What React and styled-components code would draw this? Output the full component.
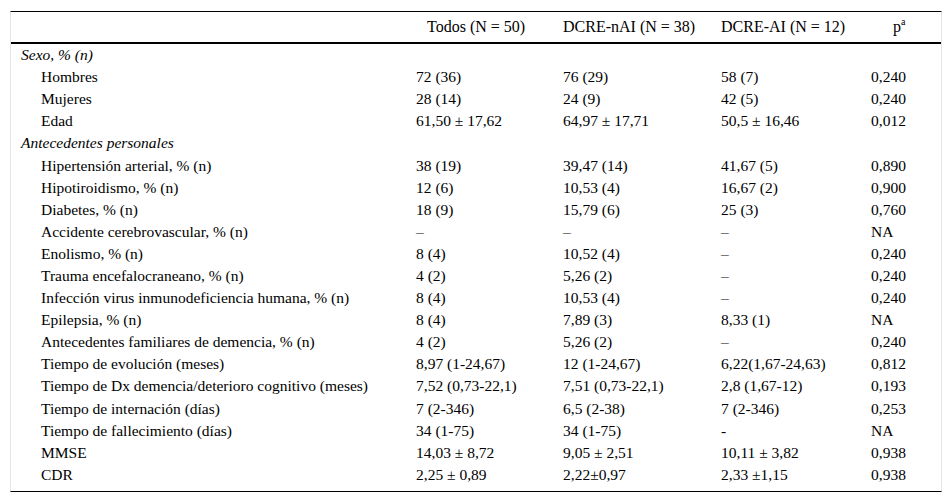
import React from "react";
import styled, { createGlobalStyle } from "styled-components";

const GlobalStyle = createGlobalStyle`
  html, body {
    margin: 0;
    padding: 0;
    background: #ffffff;
  }
`;

const Page = styled.div`
  padding: 11px 10px 12px 10px;
  font-family: "Liberation Serif", "Times New Roman", serif;
  font-size: 15.5px;
  color: #000;
`;

const Frame = styled.div`
  width: 930px;
  border-left: 1px solid #e4e4e4;
  border-right: 1px solid #e4e4e4;
  border-top: 1px solid #000;
  border-bottom: 1px solid #000;
`;

const COLS = "405px 147px 158px 150px 70px";

const HeadRow = styled.div`
  display: grid;
  grid-template-columns: ${COLS};
  height: 30px;
  align-items: center;
  font-size: 16px;
  border-bottom: 2px solid #000;
`;

const HeadCell = styled.div`
  padding-left: ${(p) => p.$offset || 0}px;
  white-space: nowrap;

  sup {
    font-size: 10px;
    vertical-align: 7px;
    line-height: 0;
  }
`;

const Body = styled.div`
  padding-bottom: 5px;
`;

const Row = styled.div`
  display: grid;
  grid-template-columns: ${COLS};
  height: 22.1px;
  align-items: center;
`;

const Label = styled.div`
  padding-left: ${(p) => (p.$group ? 10 : 30)}px;
  font-style: ${(p) => (p.$group ? "italic" : "normal")};
  white-space: nowrap;
`;

const Value = styled.div`
  white-space: nowrap;
`;

const headers = [
  { text: "", offset: 0 },
  { text: "Todos (N = 50)", offset: 11 },
  { text: "DCRE-nAI (N = 38)", offset: 0 },
  { text: "DCRE-AI (N = 12)", offset: 0 },
];

const rows = [
  { group: "Sexo, % (n)" },
  { label: "Hombres", v: ["72 (36)", "76 (29)", "58 (7)", "0,240"] },
  { label: "Mujeres", v: ["28 (14)", "24 (9)", "42 (5)", "0,240"] },
  { label: "Edad", v: ["61,50 ± 17,62", "64,97 ± 17,71", "50,5 ± 16,46", "0,012"] },
  { group: "Antecedentes personales" },
  { label: "Hipertensión arterial, % (n)", v: ["38 (19)", "39,47 (14)", "41,67 (5)", "0,890"] },
  { label: "Hipotiroidismo, % (n)", v: ["12 (6)", "10,53 (4)", "16,67 (2)", "0,900"] },
  { label: "Diabetes, % (n)", v: ["18 (9)", "15,79 (6)", "25 (3)", "0,760"] },
  { label: "Accidente cerebrovascular, % (n)", v: ["–", "–", "–", "NA"] },
  { label: "Enolismo, % (n)", v: ["8 (4)", "10,52 (4)", "–", "0,240"] },
  { label: "Trauma encefalocraneano, % (n)", v: ["4 (2)", "5,26 (2)", "–", "0,240"] },
  { label: "Infección virus inmunodeficiencia humana, % (n)", v: ["8 (4)", "10,53 (4)", "–", "0,240"] },
  { label: "Epilepsia, % (n)", v: ["8 (4)", "7,89 (3)", "8,33 (1)", "NA"] },
  { label: "Antecedentes familiares de demencia, % (n)", v: ["4 (2)", "5,26 (2)", "–", "0,240"] },
  { label: "Tiempo de evolución (meses)", v: ["8,97 (1-24,67)", "12 (1-24,67)", "6,22(1,67-24,63)", "0,812"] },
  { label: "Tiempo de Dx demencia/deterioro cognitivo (meses)", v: ["7,52 (0,73-22,1)", "7,51 (0,73-22,1)", "2,8 (1,67-12)", "0,193"] },
  { label: "Tiempo de internación (días)", v: ["7 (2-346)", "6,5 (2-38)", "7 (2-346)", "0,253"] },
  { label: "Tiempo de fallecimiento (días)", v: ["34 (1-75)", "34 (1-75)", "-", "NA"] },
  { label: "MMSE", v: ["14,03 ± 8,72", "9,05 ± 2,51", "10,11 ± 3,82", "0,938"] },
  { label: "CDR", v: ["2,25 ± 0,89", "2,22±0,97", "2,33 ±1,15", "0,938"] },
];

const App = () => {
  return (
    <Page>
      <GlobalStyle />
      <Frame>
        <HeadRow>
          {headers.map((h, i) => (
            <HeadCell key={i} $offset={h.offset}>
              {h.text}
            </HeadCell>
          ))}
          <HeadCell $offset={22}>
            p<sup>a</sup>
          </HeadCell>
        </HeadRow>
        <Body>
          {rows.map((r, i) =>
            r.group ? (
              <Row key={i}>
                <Label $group>{r.group}</Label>
              </Row>
            ) : (
              <Row key={i}>
                <Label>{r.label}</Label>
                {r.v.map((val, j) => (
                  <Value key={j}>{val}</Value>
                ))}
              </Row>
            )
          )}
        </Body>
      </Frame>
    </Page>
  );
};

export default App;
